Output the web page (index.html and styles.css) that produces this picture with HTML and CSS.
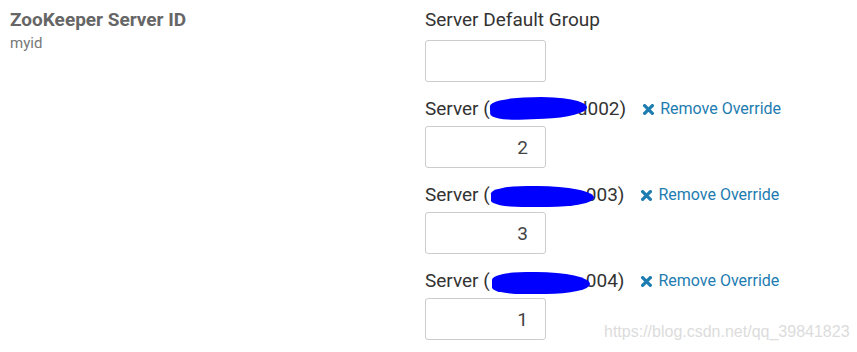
FILE: index.html
```html
<!DOCTYPE html>
<html lang="en">
<head>
    <meta charset="UTF-8">
    <title>ZooKeeper Server ID</title>
    <link rel="stylesheet" href="styles.css">
</head>
<body>
    <div class="config-row">
        <div class="config-name">
            <div class="title">ZooKeeper Server ID</div>
            <div class="key">myid</div>
        </div>
        <div class="config-values">
            <div class="group">
                <div class="group-label">Server Default Group</div>
                <input class="value-input" type="text" value="">
            </div>

            <div class="group">
                <div class="group-label">
                    <span class="host">Server (<span class="hidden h1"><i class="redact r1"></i></span>d002)</span>
                    <a class="remove" href="#"><svg class="x" viewBox="0 0 10 10"><path d="M1.5 1.5L8.5 8.5M8.5 1.5L1.5 8.5"/></svg>Remove Override</a>
                </div>
                <input class="value-input" type="text" value="2">
            </div>

            <div class="group">
                <div class="group-label">
                    <span class="host">Server (<span class="hidden h2"><i class="redact r2"></i></span>003)</span>
                    <a class="remove" href="#"><svg class="x" viewBox="0 0 10 10"><path d="M1.5 1.5L8.5 8.5M8.5 1.5L1.5 8.5"/></svg>Remove Override</a>
                </div>
                <input class="value-input" type="text" value="3">
            </div>

            <div class="group">
                <div class="group-label">
                    <span class="host">Server (<span class="hidden h3"><i class="redact r3"></i></span>004)</span>
                    <a class="remove" href="#"><svg class="x" viewBox="0 0 10 10"><path d="M1.5 1.5L8.5 8.5M8.5 1.5L1.5 8.5"/></svg>Remove Override</a>
                </div>
                <input class="value-input" type="text" value="1">
            </div>
        </div>
    </div>

    <div class="watermark">https://blog.csdn.net/qq_39841823</div>
</body>
</html>
```

FILE: styles.css
```css
* {
    margin: 0;
    padding: 0;
    box-sizing: border-box;
}

body {
    background: #fff;
    font-family: Roboto, 'Liberation Sans', sans-serif;
    color: #333;
    width: 857px;
    height: 352px;
    overflow: hidden;
    position: relative;
}

.config-row {
    display: flex;
    padding: 8px 0 0 10px;
}

.config-name {
    width: 415px;
}

.title {
    font-size: 19px;
    font-weight: 700;
    color: #666;
    line-height: 24px;
}

.key {
    font-size: 15px;
    color: #777;
    line-height: 20px;
    margin-top: 1px;
}

.config-values {
    display: flex;
    flex-direction: column;
}

.group {
    display: flex;
    flex-direction: column;
}

.group + .group {
    padding-top: 15px;
}

.group-label {
    font-size: 19px;
    line-height: 24px;
    height: 24px;
    margin-bottom: 5px;
    display: flex;
    align-items: center;
    color: #333;
    white-space: nowrap;
}

.group:first-child .group-label {
    margin-bottom: 8px;
}

.host {
    display: inline-block;
}

.hidden {
    position: relative;
    display: inline-block;
    vertical-align: top;
    height: 24px;
}

.h1 { width: 87px; }
.h2 { width: 96px; }
.h3 { width: 96px; }

.redact {
    position: absolute;
    background: #0000ff;
    border-radius: 35% 55% 45% 30%;
}

.r1 {
    left: 0;
    top: 0;
    width: 97px;
    height: 22px;
    transform: rotate(-2deg);
}

.r2 {
    left: 1px;
    top: 3px;
    width: 103px;
    height: 21px;
}

.r3 {
    left: 2px;
    top: 3px;
    width: 98px;
    height: 22px;
}

.remove {
    margin-left: 17px;
    font-size: 16px;
    color: #1d7cb0;
    text-decoration: none;
    display: flex;
    align-items: center;
}

.remove .x {
    width: 11px;
    height: 11px;
    margin-right: 6px;
    stroke: #1d7cb0;
    stroke-width: 3;
    stroke-linecap: round;
}

.value-input {
    width: 121px;
    height: 42px;
    border: 1px solid #ccc;
    border-radius: 3px;
    padding: 0 17px;
    font-family: Roboto, 'Liberation Sans', sans-serif;
    font-size: 19px;
    color: #444;
    text-align: right;
    outline: none;
}

.watermark {
    position: absolute;
    left: 604px;
    top: 323px;
    font-family: 'Liberation Sans', Arial, sans-serif;
    font-size: 16px;
    color: #dcdcdc;
    text-shadow: 0 0 1px #fff;
}
```
